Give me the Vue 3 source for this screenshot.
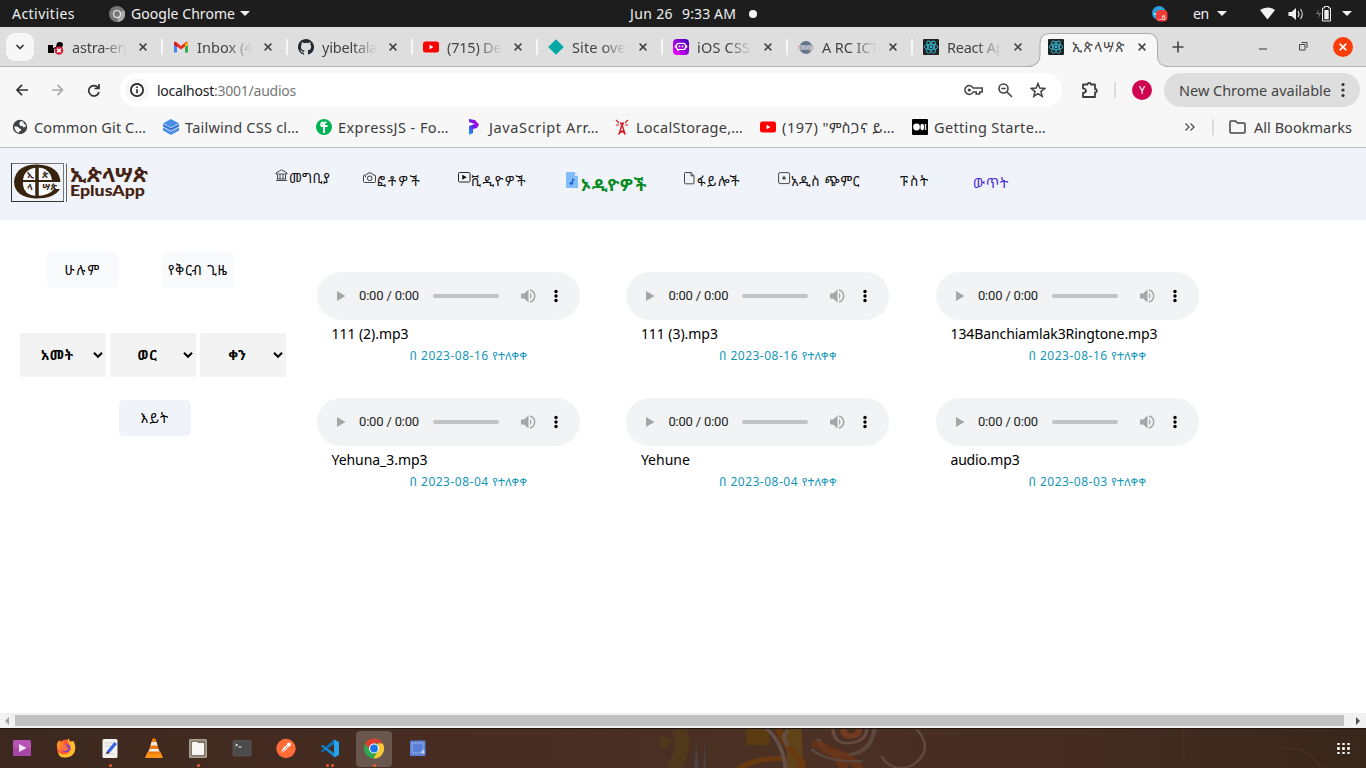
<script setup>
const icons = {
  astra: '<path d="M0 6h5v3l3-1 1-4a4 4 0 0 1 6 1l-1 4-8 1v4H0V8z" fill="#000"/><circle cx="11" cy="11.500" r="4.300" fill="#d6223a"/><path d="m9.200 9.700 3.600 3.600m0-3.600-3.600 3.600" stroke="#fff" stroke-width="1.600"/>',
  gmail: '<path d="M1 3.500v10h3V7z" fill="#4285f4"/><path d="M15 3.500v10h-3V7z" fill="#34a853"/><path d="m1 3.500 1.500-1L8 7l5.500-4.500L15 3.500 12 7.500 8 10.500 4 7.500 1 5.500z" fill="#ea2b20"/><path d="m12 5 2-2q1 0 1 2v1l-3 2z" fill="#fbbc04"/><path d="M1 3.500V6l3 2V4.500L2.500 3Q1.200 2.700 1 3.500" fill="#c5221f"/>',
  github: '<path fill="#24292f" d="M8 0C3.580 0 0 3.580 0 8c0 3.540 2.290 6.530 5.470 7.590.4.070.55-.17.55-.38v-1.490c-2.010.37-2.530-.49-2.690-.94-.09-.23-.48-.94-.82-1.130-.28-.15-.68-.52-.01-.53.63-.01 1.080.58 1.230.82.72 1.210 1.870.87 2.330.66.07-.52.28-.87.51-1.070-1.780-.2-3.640-.89-3.640-3.950 0-.87.31-1.590.82-2.150-.08-.2-.36-1.020.08-2.120 0 0 .67-.21 2.200.82a7.600 7.600 0 0 1 4 0c1.530-1.040 2.200-.82 2.200-.82.44 1.100.16 1.920.08 2.120.51.56.82 1.270.82 2.150 0 3.070-1.870 3.750-3.650 3.950.29.25.54.73.54 1.480v2.200c0 .21.15.46.55.38A8 8 0 0 0 8 0"/>',
  youtube: '<rect y="2.500" width="16" height="11" rx="2.500" fill="#f00"/><path d="M6.500 5.700v4.600L10.500 8z" fill="#fff"/>',
  diamond: '<path d="m8 .2 7.800 7.800L8 15.800.2 8z" fill="#00a9a5"/>',
  bot: '<defs><linearGradient id="bt" x1="0" y1="1" x2="1" y2="0"><stop stop-color="#f0f"/><stop offset="1" stop-color="#3300b8"/></linearGradient></defs><rect width="16" height="16" rx="4" fill="url(#bt)"/><rect x="3.500" y="4.300" width="9" height="6.200" rx="2.300" fill="none" stroke="#fff" stroke-width="1.200"/><path d="M4.500 10v2.500L7 10.500" fill="#fff"/><path d="M2.300 6v3m11.400-3v3" stroke="#fff"/><path d="M5.800 7.300h1.500m1.500 0h1.500" stroke="#fff" stroke-width="1.700"/>',
  arc: '<circle cx="8" cy="8.500" r="6.500" fill="#65758b"/><path d="M0 8.500h16" stroke="#c9c9cd" stroke-width="4.500"/><path d="m2 10.500 1.200-3.500 1.200 3.500m2 0V7h2q1.500 1 0 2l1 1.500m4-3q-3 0-3 1.500t3 1.500" fill="none" stroke="#8d9bad"/><path d="M0 7.500h2m12 0h2m-5 4h3" stroke="#dc9b93"/>',
  react: '<rect width="16" height="16" rx="1" fill="#222"/><g fill="none" stroke="#35b8d3" stroke-width=".9"><ellipse cx="8" cy="8" rx="6.800" ry="2.700"/><ellipse cx="8" cy="8" rx="6.800" ry="2.700" transform="rotate(60 8 8)"/><ellipse cx="8" cy="8" rx="6.800" ry="2.700" transform="rotate(120 8 8)"/></g><circle cx="8" cy="8" r="1.400" fill="#35b8d3"/>',
  globe: '<circle cx="8" cy="8" r="7.200" fill="#3f4145"/><path d="M2.200 7.500h2.500q2 0 2.300 1.800l2 .7v2H7.200v2Q3 13 2.200 7.500zM8 2.500q2-.8 3.500.2v1.500l2 1.500.4 2-2.400.8-1-1.500H8.300l-1-2z" fill="#f7f7f7"/>',
  layers: '<path d="m8 0 8 4.300-8 4.200-8-4.200z" fill="#4a91e6"/><path d="m0 5 8 4 8-4v2.500l-8 4.300-8-4.300z" fill="#3476cf"/><path d="m0 8.500 8 4 8-4v3L8 16l-8-4.500z" fill="#4a91e6"/>',
  fcc: '<rect width="16" height="16" fill="#fff"/><circle cx="8" cy="8" r="8" fill="#00b451"/><path d="M8 14V5q0-2 2.500-1.500M5 7h6.500M5 7q0-3 2-4" fill="none" stroke="#fff" stroke-width="2"/>',
  pp: '<defs><linearGradient id="pg" x1="1" y1="0" x2="0" y2="1"><stop stop-color="#e000f0"/><stop offset=".5" stop-color="#6a18e8"/><stop offset="1" stop-color="#00b8ff"/></linearGradient></defs><path d="m2 0 6 1 4 4.500L10 9l-4 1v4l-4 2V7l6-2-6-2z" fill="url(#pg)"/>',
  tower: '<g fill="none" stroke="#d4202a" stroke-width="1.200"><path d="M8 5 5 15m3-10 3 10M6 11l4 3m0-3-4 3M6.500 9h3M4 15h2m4 0h2"/><path d="M5 4 2 1m3 5H2m9-2 3-3m-3 5h3"/><path d="M6 4.500h4" stroke-width="2"/></g>',
  medium: '<rect width="16" height="16" rx="1" fill="#000"/><circle cx="4.500" cy="8" r="3.400" fill="#fff"/><ellipse cx="10.200" cy="8" rx="1.800" ry="3.300" fill="#fff"/><path d="M13.500 5v6" stroke="#ddd" stroke-width="1.500"/>',
}

const tabs = [
  { icon: 'astra', title: 'astra-erp', w: 60 },
  { icon: 'gmail', title: 'Inbox (46', w: 64 },
  { icon: 'github', title: 'yibeltalad', w: 64 },
  { icon: 'youtube', title: '(715) Deo', w: 63 },
  { icon: 'diamond', title: 'Site over', w: 60 },
  { icon: 'bot', title: 'iOS CSS -', w: 62 },
  { icon: 'arc', title: 'A RC ICT S', w: 68 },
  { icon: 'react', title: 'React App', w: 66 },
]

const bookmarks = [
  { icon: 'globe', title: 'Common Git C…', w: 112 },
  { icon: 'layers', title: 'Tailwind CSS cl…', w: 114 },
  { icon: 'fcc', title: 'ExpressJS - Fo…', w: 111 },
  { icon: 'pp', title: 'JavaScript Arr…', w: 110 },
  { icon: 'tower', title: 'LocalStorage,…', w: 107 },
  { icon: 'youtube', title: '(197) "ምስጋና ይ…', w: 113 },
  { icon: 'medium', title: 'Getting Starte…', w: 112 },
]

const navIcons = {
  home: '<path d="M1 4 6.500.8 12 4v1H1zM1 11.500h11M2 10h9M2.500 5.500V10m2.500-4.500V10m3-4.500V10m2.500-4.500V10" fill="none" stroke="#333" stroke-width=".9"/>',
  camera: '<path d="M2 3h1.500L5 1h3.500L10 3h1.500q1 0 1 1v5.500q0 1-1 1H1.500q-1 0-1-1V4q0-1 1.500-1z" fill="none" stroke="#333" stroke-width=".9"/><circle cx="6.700" cy="6.300" r="2.300" fill="none" stroke="#333"/><path d="M2 4.500h1" stroke="#333"/>',
  video: '<rect x=".5" y=".5" width="11.500" height="9.500" rx="1.200" fill="none" stroke="#222"/><path d="M4.300 2.800v5L8.700 5.300z" fill="#000"/>',
  audio: '<path d="M0 0h9l3 4v12H0z" fill="#82bdfb"/><path d="M9 0v4h3z" fill="#dceeff"/><path d="M6.500 7v4.500M6.500 7l2 1.200" stroke="#1d62d1" stroke-width="1.200"/><circle cx="5.400" cy="11.300" r="1.600" fill="#1d62d1"/>',
  file: '<path d="M1.500.5H7L10 3.800V11q0 .8-.8.800H1.500q-1 0-1-1V1.500q0-1 1-1zM7 .5v3.300h3" fill="none" stroke="#333" stroke-width=".9"/>',
  plus: '<rect x=".6" y=".6" width="11" height="11" rx="1.600" fill="none" stroke="#333" stroke-width=".9"/><path d="M6 4v4M4 6h4" stroke="#222"/>',
}

const navItems = [
  { key: 'home', label: 'መግቢያ', w: 41 },
  { key: 'camera', label: 'ፎቶዎች', w: 45 },
  { key: 'video', label: 'ቪዲዮዎች', w: 56 },
  { key: 'audio', label: 'ኦዲዮዎች', w: 66 },
  { key: 'file', label: 'ፋይሎች', w: 44 },
  { key: 'plus', label: 'አዲስ ጭምር', w: 69 },
  { key: 'post', label: 'ፑስት', w: 30 },
  { key: 'logout', label: 'ውጥት', w: 36 },
]

const selects = [
  { label: 'አመት', w: 33 },
  { label: 'ወር', w: 20 },
  { label: 'ቀን', w: 18 },
]

const audios = [
  { name: '111 (2).mp3', w: 77, date: '2023-08-16' },
  { name: '111 (3).mp3', w: 77, date: '2023-08-16' },
  { name: '134Banchiamlak3Ringtone.mp3', w: 207, date: '2023-08-16' },
  { name: 'Yehuna_3.mp3', w: 96, date: '2023-08-04' },
  { name: 'Yehune', w: 49, date: '2023-08-04' },
  { name: 'audio.mp3', w: 69, date: '2023-08-03' },
]

const dock = [
  { key: 'rhythm', dots: 0, art: '<rect x="3" y="6" width="18" height="16" rx="1.500" fill="#b653b3"/><path d="M3 14h18v6.500q0 1.500-1.500 1.500h-15Q3 22 3 20.500z" fill="#a646a6"/><path d="M9 10v8l7.500-4z" fill="#f7e6f6"/>' },
  { key: 'firefox', dots: 0, art: '<circle cx="12" cy="14.500" r="9" fill="#ff5a36"/><path d="M14 4q2 2 1.500 4l4-1q3 6 1 11t-9 5.500T4 18q5 4 10 1 5-4 1-9-2-3-1-6z" fill="#ffbd2e"/><path d="M3 13q-1-5 3-7l1 3 3-1-1 4q-5 3-1 6-4-1-5-5z" fill="#ff8b29"/><circle cx="12" cy="14" r="4.300" fill="#7b3bc8"/><path d="M8 11q4-2 6 1l-3 1q2 1 4 0-1 4-4 4t-4-4z" fill="#ff7539"/>' },
  { key: 'editor', dots: 1, art: '<rect x="4.500" y="5" width="15" height="19" rx="1.500" fill="#f1f1ef"/><path d="M7 9h9M7 12h7M7 20h9" stroke="#cfcfcf"/><path d="m9 17 7.500-9 2.500 2-7.500 9z" fill="#3465e0"/><path d="m9 17-1 3 3.500-1z" fill="#222"/>' },
  { key: 'vlc', dots: 0, art: '<path d="m5 19 1.500-2h11L19 19l2 5H3z" fill="#f79316"/><path d="M10.500 4.500h3L18 19q-6 3-12 0z" fill="#ee7b0b"/><path d="M9.500 8h5l1 3.500h-7zM7.500 15h9l.8 2.500H6.800z" fill="#e9e9e7"/>' },
  { key: 'files', dots: 1, art: '<rect x="3" y="5" width="18" height="19" rx="1.500" fill="#aaa18f"/><rect x="4.500" y="6.500" width="15" height="16" rx="1" fill="#80796a"/><path d="M6 9q0-1 1-1h4l1 1h5q1 0 1 1v10q0 1-1 1H7q-1 0-1-1z" fill="#f7f6f4"/>' },
  { key: 'terminal', dots: 0, art: '<rect x="3" y="6.500" width="18" height="15.500" rx="1.500" fill="#4b4b4b" stroke="#666" stroke-width=".6"/><path d="m5.500 10 2 1-2 1m3 1h3" fill="none" stroke="#eee" stroke-width="1"/>' },
  { key: 'postman', dots: 0, art: '<circle cx="12" cy="14.500" r="9.700" fill="#ff6c37"/><path d="m7 19 2-5 5-4 2 1-4 5z" fill="#fff"/><circle cx="15" cy="10.500" r="2" fill="#fff"/><path d="m7 19 7-7" stroke="#ff6c37" stroke-width=".7"/>' },
  { key: 'code', dots: 2, art: '<path d="M16 5.500 5.500 15 3 17l1.500 1.300L16 10z" fill="#0873b9"/><path d="M16 23 3 12l1.500-1.300L16 19z" fill="#1588d1"/><path d="m16 5.500 5 2.500v13l-5 2.500z" fill="#25a3ef"/>' },
  { key: 'chrome', dots: 1, art: '<circle cx="12" cy="14.500" r="10" fill="#30a852"/><path d="M3.300 9.500a10 10 0 0 1 17.400 0H12v5H6.500z" fill="#e33b2e"/><path d="M20.700 9.500A10 10 0 0 1 11.500 24.500L16.500 16l-1-6.500z" fill="#fcc934"/><circle cx="12" cy="14.500" r="5" fill="#fff"/><circle cx="12" cy="14.500" r="3.900" fill="#1a73e8"/>' },
  { key: 'shot', dots: 0, art: '<rect x="4" y="6.500" width="15.500" height="15.500" rx="1" fill="#5b80d5"/><rect x="6" y="9" width="11" height="10" fill="none" stroke="#b9cbf4" stroke-dasharray="1.500 1"/><path d="M15 18h4m-2-2v4" stroke="#dbe5ff"/>' },
]

// Spreads the letters of a single line so that it fills the given width.
const vFit = {
  mounted(el, { value }) {
    el.style.letterSpacing = '0px'
    const range = document.createRange()
    range.selectNodeContents(el)
    const natural = range.getBoundingClientRect().width
    const count = Array.from(el.textContent).length
    el.style.letterSpacing = `${((value - natural) / count).toFixed(3)}px`
  },
}
</script>

<template>
  <div class="screen">
    <header class="topbar">
      <span v-fit="63" class="activities">Activities</span>
      <svg class="gchrome" width="16" height="16" viewBox="0 0 16 16"><circle cx="8" cy="8" r="8" fill="#777" /><path d="M8 8 15 4a8 8 0 0 1-6 12z" fill="#aaa" /><circle cx="8" cy="8" r="4" fill="#eee" /><circle cx="8" cy="8" r="2.900" fill="#777" /></svg>
      <span v-fit="104" class="appname">Google Chrome</span>
      <i class="caret"></i>
      <span v-fit="43" class="date">Jun 26</span>
      <span v-fit="54" class="clock">9:33 AM</span>
      <i class="notice"></i>
      <svg class="tray" width="16" height="16" viewBox="0 0 16 16"><circle cx="7" cy="7" r="7" fill="#2b9ddb" /><path d="M2 8h4" stroke="#fff" stroke-width="1.300" /><rect x="4" y="4" width="11.500" height="11.500" rx="4" fill="#f23b36" /><text x="6" y="13.500" class="traytext">..6</text></svg>
      <span v-fit="16" class="lang">en</span>
      <i class="caret"></i>
      <svg class="status" width="94" height="18" viewBox="0 0 94 18"><path d="M0 5q7.500-5 15 0l-7.500 9.500z" fill="#f2f2f2" /><path d="M28.500 7h3L36 3v12l-4.500-4h-3z" fill="#f2f2f2" /><path d="M38 6q2 3 0 6m2.500-8q3.500 5 0 10" fill="none" stroke="#ddd" stroke-width="1.100" /><path d="m59 4-3 5h3l-1 5 3-6h-3z" fill="#777" /><path d="M62.500 3h2V1.500h4V3h2v13h-8z" fill="none" stroke="#eee" /><rect x="64.300" y="5" width="4.400" height="9.300" fill="#eee" /><path d="M82 6h10l-5 5z" fill="#f2f2f2" /></svg>
    </header>

    <div class="tabstrip">
      <div class="search"><svg width="10" height="8" viewBox="0 0 10 8"><path d="m1.500 2 3.500 3.500L8.500 2" fill="none" stroke="#333" stroke-width="1.700" /></svg></div>
      <div v-for="t in tabs" :key="t.title" class="tab">
        <svg width="16" height="16" viewBox="0 0 16 16" v-html="icons[t.icon]"></svg>
        <div class="tabtitle"><span v-fit="t.w">{{ t.title }}</span></div>
        <svg class="x" width="8" height="8" viewBox="0 0 8 8"><path d="m.6.6 6.800 6.800m0-6.800L.6 7.400" /></svg>
      </div>
      <div class="tab active">
        <svg class="shape" width="140" height="35" viewBox="0 0 140 35"><path d="M0 34h1q11-1 11-11.500V11Q12 .5 22 .5h97.500q10 0 10 10.500v12q0 10 10.500 11v1H0z" fill="#f7f7f7" /><path d="M0 33.500q12-1 12-11V11Q12 .5 22 .5h97.500q10 0 10 10.500v12q0 10 10.500 10.500" fill="none" stroke="#aaa" /></svg>
        <svg width="16" height="16" viewBox="0 0 16 16" v-html="icons.react"></svg>
        <div class="activetitle"><span v-fit="54">ኢጵላሣጵ</span></div>
        <svg class="x" width="8" height="8" viewBox="0 0 8 8"><path d="m.6.6 6.800 6.800m0-6.800L.6 7.400" /></svg>
      </div>
      <svg class="newtab" width="12" height="12" viewBox="0 0 12 12"><path d="M6 .5v11M.5 6h11" stroke="#444" stroke-width="1.600" /></svg>
      <svg class="min" width="8" height="2" viewBox="0 0 8 2"><path d="M0 1h8" stroke="#333" /></svg>
      <svg class="max" width="9" height="9" viewBox="0 0 9 9"><path d="M.5 2.500h5.500v5.500H.5zM2.500.5h5.500v5.500" fill="none" stroke="#444" /></svg>
      <div class="close"><svg width="8" height="8" viewBox="0 0 8 8"><path d="m.6.6 6.800 6.800m0-6.800L.6 7.400" stroke="#fff" stroke-width="1.500" /></svg></div>
    </div>

    <div class="toolbar">
      <svg class="arrows" width="88" height="14" viewBox="0 0 88 14"><g fill="none" stroke-width="1.700"><path d="M13 7H2m5-5.200L2 7l5 5.200" stroke="#333" /><path d="M37 7h10.500m-5-5.200 5 5.200-5 5.200" stroke="#aaa" /><path d="M83 4.500A5.200 5.200 0 1 0 84 9M84 1v4.500h-4.500" stroke="#333" /></g></svg>
      <div class="omnibox">
        <div class="info"><svg width="14" height="14" viewBox="0 0 14 14"><circle cx="7" cy="7" r="6.100" fill="none" stroke="#222" stroke-width="1.700" /><path d="M7 6.300v4M7 3.500v1.500" stroke="#222" stroke-width="1.600" /></svg></div>
        <span v-fit="139" class="url"><b>localhost</b>:3001/audios</span>
        <svg width="19" height="12" viewBox="0 0 19 12"><g fill="none" stroke="#444" stroke-width="1.500"><path d="M9.200 4A4.400 4.400 0 1 0 9.200 8h3v2h3.500V8h2.500V4z" /></g><circle cx="5.300" cy="6" r="1.600" fill="#444" /></svg>
        <svg class="lens" width="15" height="15" viewBox="0 0 15 15"><g fill="none" stroke="#444" stroke-width="1.600"><circle cx="5.500" cy="5.500" r="4.500" /><path d="m9 9 5 5M3.300 5.500h4.400" /></g></svg>
        <svg class="star" width="16" height="16" viewBox="0 0 16 16"><path d="m8 1.500 1.800 4.600 5 .3-3.900 3.200 1.300 4.800L8 11.700l-4.200 2.700 1.300-4.800L1.200 6.400l5-.3z" fill="none" stroke="#444" stroke-width="1.500" /></svg>
      </div>
      <svg class="puzzle" width="18" height="18" viewBox="0 0 18 18"><path d="M2 3.500h4.500a1.700 1.700 0 0 1 3.400 0H14V8a1.700 1.700 0 0 1 0 3.500V16H2v-4q3-.5 3-2.300T2 7.300z" fill="none" stroke="#3c3c3c" stroke-width="1.800" stroke-linejoin="round" /></svg>
      <i class="vline"></i>
      <div class="avatar">Y</div>
      <div class="update"><span v-fit="152">New Chrome available</span><svg width="4" height="16" viewBox="0 0 4 16"><g fill="#333"><circle cx="2" cy="2.500" r="1.600" /><circle cx="2" cy="8" r="1.600" /><circle cx="2" cy="13.500" r="1.600" /></g></svg></div>
    </div>

    <div class="bookmarks">
      <div class="marks">
        <div v-for="b in bookmarks" :key="b.title" class="mark">
          <svg width="16" height="16" viewBox="0 0 16 16" v-html="icons[b.icon]"></svg>
          <span v-fit="b.w">{{ b.title }}</span>
        </div>
      </div>
      <svg class="more" width="12" height="10" viewBox="0 0 12 10"><path d="m1.500 1.500 3.500 3.500-3.500 3.500m5-7 3.500 3.500-3.500 3.500" fill="none" stroke="#555" stroke-width="1.400" /></svg>
      <i class="vline"></i>
      <svg class="folder" width="17" height="14" viewBox="0 0 17 14"><path d="M1 2.500V12q0 1 1 1h13q1 0 1-1V4q0-1-1-1H8.500L6.500 1H2Q1 1 1 2.500z" fill="none" stroke="#444" stroke-width="1.500" /></svg>
      <span v-fit="98">All Bookmarks</span>
    </div>

    <nav class="nav">
      <svg class="logo" width="140" height="44" viewBox="0 0 140 44">
        <rect x=".5" y=".5" width="52" height="38" fill="none" stroke="#777" /><path d="M0 38.500h53M.5 0v39" stroke="#333" /><path d="M55.500.5v38.500" stroke="#666" />
        <path fill="#f8f9fc" d="M11 17q2-12 15-13 15 1 17 13v4q2 8-17 14-13-2-15-14z" />
        <path fill="#38230f" fill-rule="evenodd" d="M49.500 19H12v3q1 10 13 11 13 0 18-7h6q-6 9.500-24 9.500Q3 34 3 18.500 5 1.500 26 1.500 48 2 49.500 19zM41 17Q39 4.500 26 4.500 13 6 12 17z" />
        <path d="M26 3v32" stroke="#38230f" stroke-width="3.500" />
        <g class="tiny"><text x="16" y="15">ኢ</text><text x="31" y="15">ጵ</text><text x="16" y="27">ላ</text><text x="31" y="27" textLength="15" lengthAdjust="spacingAndGlyphs">ሣጵ</text></g>
        <text class="am" x="59" y="19" textLength="78" lengthAdjust="spacingAndGlyphs">ኢጵላሣጵ</text>
        <text class="en" x="59" y="33" textLength="75" lengthAdjust="spacingAndGlyphs">EplusApp</text>
      </svg>
      <div class="links">
        <a v-for="n in navItems" :key="n.key" :class="['link', n.key]">
          <svg v-if="navIcons[n.key]" width="13" height="16" viewBox="0 0 13 16" v-html="navIcons[n.key]"></svg>
          <span v-fit="n.w">{{ n.label }}</span>
        </a>
      </div>
    </nav>

    <main class="page">
      <aside class="side">
        <div class="buttons"><div class="btn pale"><span v-fit="37">ሁሉም</span></div><div class="btn pale"><span v-fit="60">የቅርብ ጊዜ</span></div></div>
        <div class="selects">
          <div v-for="s in selects" :key="s.label" class="select">
            <span v-fit="s.w">{{ s.label }}</span>
            <svg width="10" height="8" viewBox="0 0 10 8"><path d="m1 1.800 4 4 4-4" fill="none" stroke="#000" stroke-width="2" /></svg>
          </div>
        </div>
        <div class="btn view"><span v-fit="29">እይት</span></div>
      </aside>
      <section class="list">
        <article v-for="a in audios" :key="a.name" class="card">
          <div class="player">
            <svg class="play" width="9" height="10" viewBox="0 0 9 10"><path d="M0 0v10l8.500-5z" fill="#a5a6a7" /></svg>
            <span v-fit="60" class="time">0:00 / 0:00</span>
            <i class="track"></i>
            <svg class="vol" width="15" height="14" viewBox="0 0 15 14"><path d="M0 4.500h3L7.500.5v13L3 9.500H0z" fill="#a5a6a7" /><path d="M9 3.800q3 3.200 0 6.400z" fill="#a5a6a7" /><path d="M9 1q4.700 1.500 4.700 6T9 13" fill="none" stroke="#a5a6a7" stroke-width="1.500" /></svg>
            <svg class="kebab" width="4" height="14" viewBox="0 0 4 14"><circle cx="2" cy="2.500" r="1.700" /><circle cx="2" cy="7" r="1.700" /><circle cx="2" cy="11.500" r="1.700" /></svg>
          </div>
          <p class="name"><span v-fit="a.w">{{ a.name }}</span></p>
          <p class="when"><span v-fit="118">በ {{ a.date }} <span class="released">የተለቀቀ</span></span></p>
        </article>
      </section>
    </main>

    <div class="hscroll">
      <svg width="15" height="15" viewBox="0 0 15 15"><path d="M9 4v8L5 8z" fill="#a0a0a0" /></svg>
      <i class="thumb"></i>
      <svg width="15" height="15" viewBox="0 0 15 15"><path d="M5 4v8l4-4z" fill="#505050" /></svg>
    </div>

    <footer class="dock">
      <svg class="paper" width="706" height="40" viewBox="0 0 706 40">
        <g fill="none" transform="scale(1.350 1)">
          <path d="M-8 16q10-4 14 0M14 0q6 18-4 40" stroke="#554016" stroke-width="11" opacity=".55" />
          <path d="M64 8h17" stroke="#5c3a12" stroke-width="16" />
          <path d="m99 0 1 40" stroke="#674818" stroke-width="12" opacity=".8" />
          <path d="M88 0q2 12 12 25t2 15M58 40q14-12 35-10" stroke="#69390f" stroke-width="5" />
          <path d="M79 0q12 13 14 40M95 2q-6 4 0 15" stroke="#645048" stroke-width="3" />
          <path d="M117 10q5 18 22 16T159 0" stroke="#5d473c" stroke-width="3.500" />
          <path d="M128 0q1 16 13 14t12-14" stroke="#654b40" stroke-width="2.500" />
          <path d="M136 0q0 8 6 7t5-7" stroke="#723a20" stroke-width="5" />
          <path d="M113 14q20 8 23 26M120 20q20 5 28 20" stroke="#6d3315" stroke-width="7" opacity=".8" />
          <path d="M112 20q12 14 38 12" stroke="#5d473c" stroke-width="2.500" />
          <path d="M190 0q9 14 5 25-6 14-17 14-10-1-14-12" stroke="#604a3e" stroke-width="2" />
          <path d="M25 40 27 15l2 25m3 0 1-30 1 30" fill="#4b4141" />
          <path d="M388 0v30M460 20q20-4 30 20" stroke="#50301e" />
        </g>
      </svg>
      <div v-for="d in dock" :key="d.key" :class="['app', d.key]">
        <svg width="24" height="30" viewBox="0 0 24 30" v-html="d.art"></svg>
        <div class="dots"><i v-for="n in d.dots" :key="n"></i></div>
      </div>
      <div class="grid"><i v-for="n in 9" :key="n"></i></div>
    </footer>
  </div>
</template>

<style>
body { margin: 0; overflow: hidden; }
</style>

<style scoped>
* { box-sizing: border-box; }
svg { display: block; flex: none; }
i { display: block; flex: none; }
.screen { width: 1366px; height: 768px; display: flex; flex-direction: column; overflow: hidden; background: #fff; font-family: "Noto Sans", "Noto Sans Ethiopic", "Abyssinica SIL", sans-serif; font-size: 14.500px; white-space: nowrap; }
.topbar { height: 27px; flex: none; background: #1d1d1d; color: #f0f0f0; display: flex; align-items: center; padding-left: 12px; font-size: 14px; }
.topbar span { flex: none; line-height: 26px; }
.activities { width: 63px; }
.gchrome { margin-left: 34px; }
.appname { width: 104px; margin-left: 6px; }
.caret { border: 5px solid transparent; border-top: 5px solid #f0f0f0; border-bottom: 0; margin-left: 5px; }
.date { width: 42px; margin-left: 380px; }
.clock { width: 53px; margin-left: 10px; }
.notice { width: 8px; height: 8px; border-radius: 50%; background: #f4f4f4; margin-left: 14px; }
.tray { margin-left: 395px; }
.traytext { font-size: 7px; fill: #fff; }
.lang { width: 16px; margin-left: 25px; }
.lang + .caret { margin-left: 8px; }
.status { margin-left: 33px; }

.tabstrip { height: 40px; flex: none; background: #dedede; border-bottom: 1px solid #b5b5b5; display: flex; align-items: center; padding-left: 6px; color: #444; }
.search { width: 28px; height: 28px; border-radius: 9px; background: #f7f7f7; display: flex; align-items: center; justify-content: center; margin-right: 14px; flex: none; }
.tab { width: 125px; height: 16px; display: flex; align-items: center; flex: none; position: relative; }
.tab:not(.active)::after { content: ""; width: 2px; height: 16px; background: #f7f7f7; margin-left: 14px; }
.tab:nth-child(9)::after { visibility: hidden; }
.tabtitle { width: 55px; overflow: hidden; margin-left: 8px; line-height: 22px; flex: none; -webkit-mask-image: linear-gradient(90deg, #000 55%, transparent 100%); mask-image: linear-gradient(90deg, #000 55%, transparent 100%); }
.x { stroke: #444; stroke-width: 1.500; margin-left: 12px; }
.shape { position: absolute; left: -20px; top: -6px; }
.active { width: 116px; }
.active > svg:not(.shape), .activetitle { position: relative; }
.activetitle { width: 54px; margin-left: 8px; font-size: 14px; }
.newtab { margin-left: 8px; }
.min { margin: 4px 0 0 75px; }
.max { margin-left: 32px; }
.close { width: 20px; height: 20px; margin-left: 25px; border-radius: 50%; background: #fa3c08; display: flex; align-items: center; justify-content: center; }

.toolbar { height: 45px; flex: none; background: #f7f7f7; display: flex; align-items: center; padding: 1px 0 0 15px; color: #444; }
.omnibox { width: 942px; height: 34px; border-radius: 17px; background: #fff; margin-left: 17px; display: flex; align-items: center; padding-left: 5px; }
.info { width: 24px; height: 24px; border-radius: 50%; background: #f7f7f7; display: flex; align-items: center; justify-content: center; }
.url { color: #777; width: 140px; margin: 0 667px 0 8px; flex: none; font-size: 14px; }
.url b { color: #202020; font-weight: 400; }
.lens { margin-left: 15px; }
.star { margin-left: 17px; }
.puzzle { margin-left: 19px; }
.vline { width: 2px; height: 16px; background: #dcdcdc; }
.toolbar .vline { margin-left: 15px; }
.avatar { width: 20px; height: 20px; border-radius: 50%; background: #cf0450; color: #fff; font-size: 11px; line-height: 20px; text-align: center; margin-left: 16px; }
.update { width: 196px; height: 34px; border-radius: 17px; background: #dedede; margin-left: 12px; padding-left: 15px; display: flex; align-items: center; }
.update span { width: 152px; flex: none; }
.update svg { margin-left: 10px; }

.bookmarks { height: 36px; flex: none; background: #f7f7f7; border-bottom: 1px solid #bcbfc5; display: flex; align-items: center; padding: 0 0 5px 12px; color: #3c3c3c; }
.marks { display: grid; grid-template-columns: 151px 153px 151px 147px 146px 152px 272px; }
.mark { display: flex; align-items: center; gap: 6px; }
.mark span { line-height: 18px; }
.bookmarks .vline { margin-left: 16px; }
.folder { margin: 0 8px 0 15px; }

.nav { height: 72px; flex: none; background: #f0f3f9; display: flex; color: #111; }
.logo { margin: 15px 0 0 11px; }
.tiny { font-size: 9px; font-weight: 700; fill: #38230f; }
.am { font-size: 20px; font-weight: 700; fill: #452312; }
.en { font-size: 14.500px; font-weight: 900; fill: #452312; font-family: Lato, sans-serif; }
.links { margin-left: 124px; display: grid; grid-template-columns: 88px 95px 108px 118px 94px 122px 73px 60px; font-size: 13.500px; }
.link { display: flex; align-items: flex-start; padding-top: 24px; }
.link span { line-height: 18px; }
.home { padding-top: 21px; }
.link svg { margin-right: 1px; }
.file svg, .video svg, .plus svg { margin-right: 0; }
.audio { font-size: 17px; font-weight: 700; color: #058b22; }
.audio svg { margin-right: 2px; }
.audio span { line-height: 25px; }
.logout { padding-top: 26px; color: #4a2bdc; }

.page { height: 493px; flex: none; display: flex; font-size: 13.500px; color: #000; }
.side { width: 317px; flex: none; padding: 32px 0 0 20px; }
.buttons { display: flex; gap: 43px; margin-left: 27px; }
.btn { width: 72px; height: 36px; border-radius: 5px; background: #f0f3f9; display: flex; align-items: center; justify-content: center; }
.btn span { line-height: 18px; }
.pale { background: #f9fafc; }
.selects { display: flex; gap: 4px; margin-top: 45px; }
.select { width: 86px; height: 44px; border-radius: 2px; background: #f3f3f3; font-weight: 700; display: grid; grid-template-columns: 75px 11px; align-items: center; text-align: center; }
.select svg { margin-left: -2px; }
.view { margin: 23px 0 0 99px; padding-bottom: 1px; }
.list { display: grid; grid-template-columns: 309.400px 309.600px 263px; grid-auto-rows: 126px; padding-top: 52px; }
.player { width: 263px; height: 48px; border-radius: 24px; background: #f1f3f4; display: flex; align-items: center; padding-left: 20px; }
.time { font: 13px/20px Roboto, sans-serif; width: 60px; margin-left: 13px; color: #222; flex: none; }
.track { width: 66px; height: 4px; border-radius: 2px; background: #c1c2c3; margin-left: 14px; }
.vol { margin-left: 22px; }
.kebab { margin-left: 18px; }
.name { margin: 4px 0 0 14.500px; font-size: 14px; line-height: 20px; }
.when { margin: 3px 0 0; width: 303px; text-align: center; color: #1396b8; font-size: 12px; line-height: 18px; }
.released { font-size: 11.500px; }

.hscroll { height: 15px; flex: none; background: #f1f1f1; display: flex; align-items: center; }
.thumb { width: 1329px; height: 11px; background: #c1c1c1; margin-right: 7px; }
.dock { height: 40px; flex: none; background: linear-gradient(90deg, #3c281f, #482d22 35%, #4b3024 60%, #442c20 80%, #38261b); border-top: 1px solid #211611; display: flex; align-items: center; padding-left: 4px; position: relative; }
.paper { position: absolute; left: 660px; top: 0; }
.app { width: 36px; height: 36px; margin-right: 8px; border-radius: 4px; position: relative; display: flex; justify-content: center; flex: none; padding-top: 3px; }
.app > svg { width: 24px; height: 30px; }
.chrome { background: #69564c; }
.dots { position: absolute; left: 0; right: 0; bottom: 0; display: flex; justify-content: center; gap: 2px; }
.dots i { width: 3px; height: 3px; border-radius: 50%; background: #f05a28; }
.grid { position: relative; margin-left: 893px; display: grid; grid-template-columns: repeat(3, 3px); gap: 2.200px; }
.grid i { width: 2.500px; height: 2.500px; background: #f3f3f3; border-radius: 1px; }
</style>
